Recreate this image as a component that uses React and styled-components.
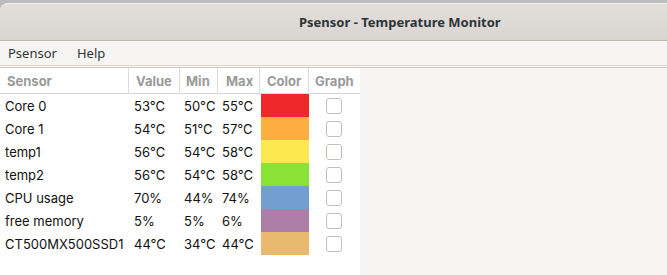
import { Fragment } from 'react';
import styled, { createGlobalStyle } from 'styled-components';

const GlobalStyle = createGlobalStyle`
  html, body {
    margin: 0;
    padding: 0;
    width: 667px;
    height: 275px;
    overflow: hidden;
    background: #c4c4c4;
  }
`;

const Desktop = styled.div`
  width: 667px;
  height: 275px;
  padding-top: 3px;
  box-sizing: border-box;
  background: linear-gradient(#bcbcbc, #cfcfcf);
  font-family: "Noto Sans", "DejaVu Sans", sans-serif;
`;

const Window = styled.div`
  height: 272px;
  display: flex;
  flex-direction: column;
  background: #f6f5f4;
  border-radius: 8px 0 0 0;
  overflow: hidden;
  border-top: 1px solid #f4f3f1;
`;

const TitleBar = styled.div`
  height: 36px;
  flex-shrink: 0;
  display: flex;
  align-items: center;
  padding-left: 299px;
  background: linear-gradient(#e1dedb, #d9d6d2);
  border-bottom: 1px solid #bdb8b0;
  font-size: 13px;
  font-weight: 700;
  color: #2e3436;
`;

const MenuBar = styled.div`
  height: 24px;
  flex-shrink: 0;
  display: flex;
  align-items: center;
  gap: 20px;
  padding-left: 8px;
  font-size: 13px;
  color: #2e3436;
  border-bottom: 1px solid #dcd9d5;
`;

const Separator = styled.div`
  height: 1px;
  margin-top: 1px;
  flex-shrink: 0;
  background: #cdc8c2;
`;

const Content = styled.div`
  flex: 1;
  display: flex;
`;

const TablePane = styled.div`
  width: 360px;
  background: #ffffff;
  font-family: Inter, "Noto Sans", sans-serif;
`;

const Grid = styled.div`
  display: grid;
  grid-template-columns: 129px 51px 38px 42px 49px 51px;
  grid-template-rows: 26px;
  grid-auto-rows: 23px;
`;

const HeadCell = styled.div`
  box-sizing: border-box;
  display: flex;
  align-items: center;
  padding-left: ${p => p.$pad || 6}px;
  border-right: ${p => (p.$last ? 'none' : '1px solid #dedede')};
  border-bottom: 1px solid #d6d6d6;
  font-size: 13px;
  font-weight: 700;
  color: #9a9a9a;
`;

const Cell = styled.div`
  display: flex;
  align-items: center;
  padding-left: ${p => p.$pad || 5}px;
  font-size: 13px;
  color: #111;
  white-space: nowrap;
`;

const Swatch = styled.div`
  margin-left: 1px;
  background: ${p => p.$color};
`;

const CheckCell = styled.div`
  display: flex;
  align-items: center;
  padding-left: 17px;
`;

const Check = styled.div`
  width: 14px;
  height: 14px;
  border: 1px solid #c4bfb9;
  border-radius: 3px;
  background: #fff;
`;

const EmptyPane = styled.div`
  flex: 1;
  background: #f6f5f4;
`;

const sensors = [
  { name: 'Core 0', value: '53°C', min: '50°C', max: '55°C', color: '#ef2929' },
  { name: 'Core 1', value: '54°C', min: '51°C', max: '57°C', color: '#fcaf3e' },
  { name: 'temp1', value: '56°C', min: '54°C', max: '58°C', color: '#fce94f' },
  { name: 'temp2', value: '56°C', min: '54°C', max: '58°C', color: '#8ae234' },
  { name: 'CPU usage', value: '70%', min: '44%', max: '74%', color: '#729fcf' },
  { name: 'free memory', value: '5%', min: '5%', max: '6%', color: '#ad7fa8' },
  { name: 'CT500MX500SSD1', value: '44°C', min: '34°C', max: '44°C', color: '#e9b96e' },
];

export default function App() {
  return (
    <Desktop>
      <GlobalStyle />
      <Window>
        <TitleBar>Psensor - Temperature Monitor</TitleBar>
        <MenuBar>
          <span>Psensor</span>
          <span>Help</span>
        </MenuBar>
        <Separator />
        <Content>
          <TablePane>
            <Grid>
              <HeadCell $pad={7}>Sensor</HeadCell>
              <HeadCell $pad={7}>Value</HeadCell>
              <HeadCell $pad={6}>Min</HeadCell>
              <HeadCell $pad={8}>Max</HeadCell>
              <HeadCell $pad={7}>Color</HeadCell>
              <HeadCell $pad={6} $last>Graph</HeadCell>
              {sensors.map(s => (
                <Fragment key={s.name}>
                  <Cell>{s.name}</Cell>
                  <Cell>{s.value}</Cell>
                  <Cell $pad={4}>{s.min}</Cell>
                  <Cell $pad={4}>{s.max}</Cell>
                  <Swatch $color={s.color} />
                  <CheckCell>
                    <Check />
                  </CheckCell>
                </Fragment>
              ))}
            </Grid>
          </TablePane>
          <EmptyPane />
        </Content>
      </Window>
    </Desktop>
  );
}
